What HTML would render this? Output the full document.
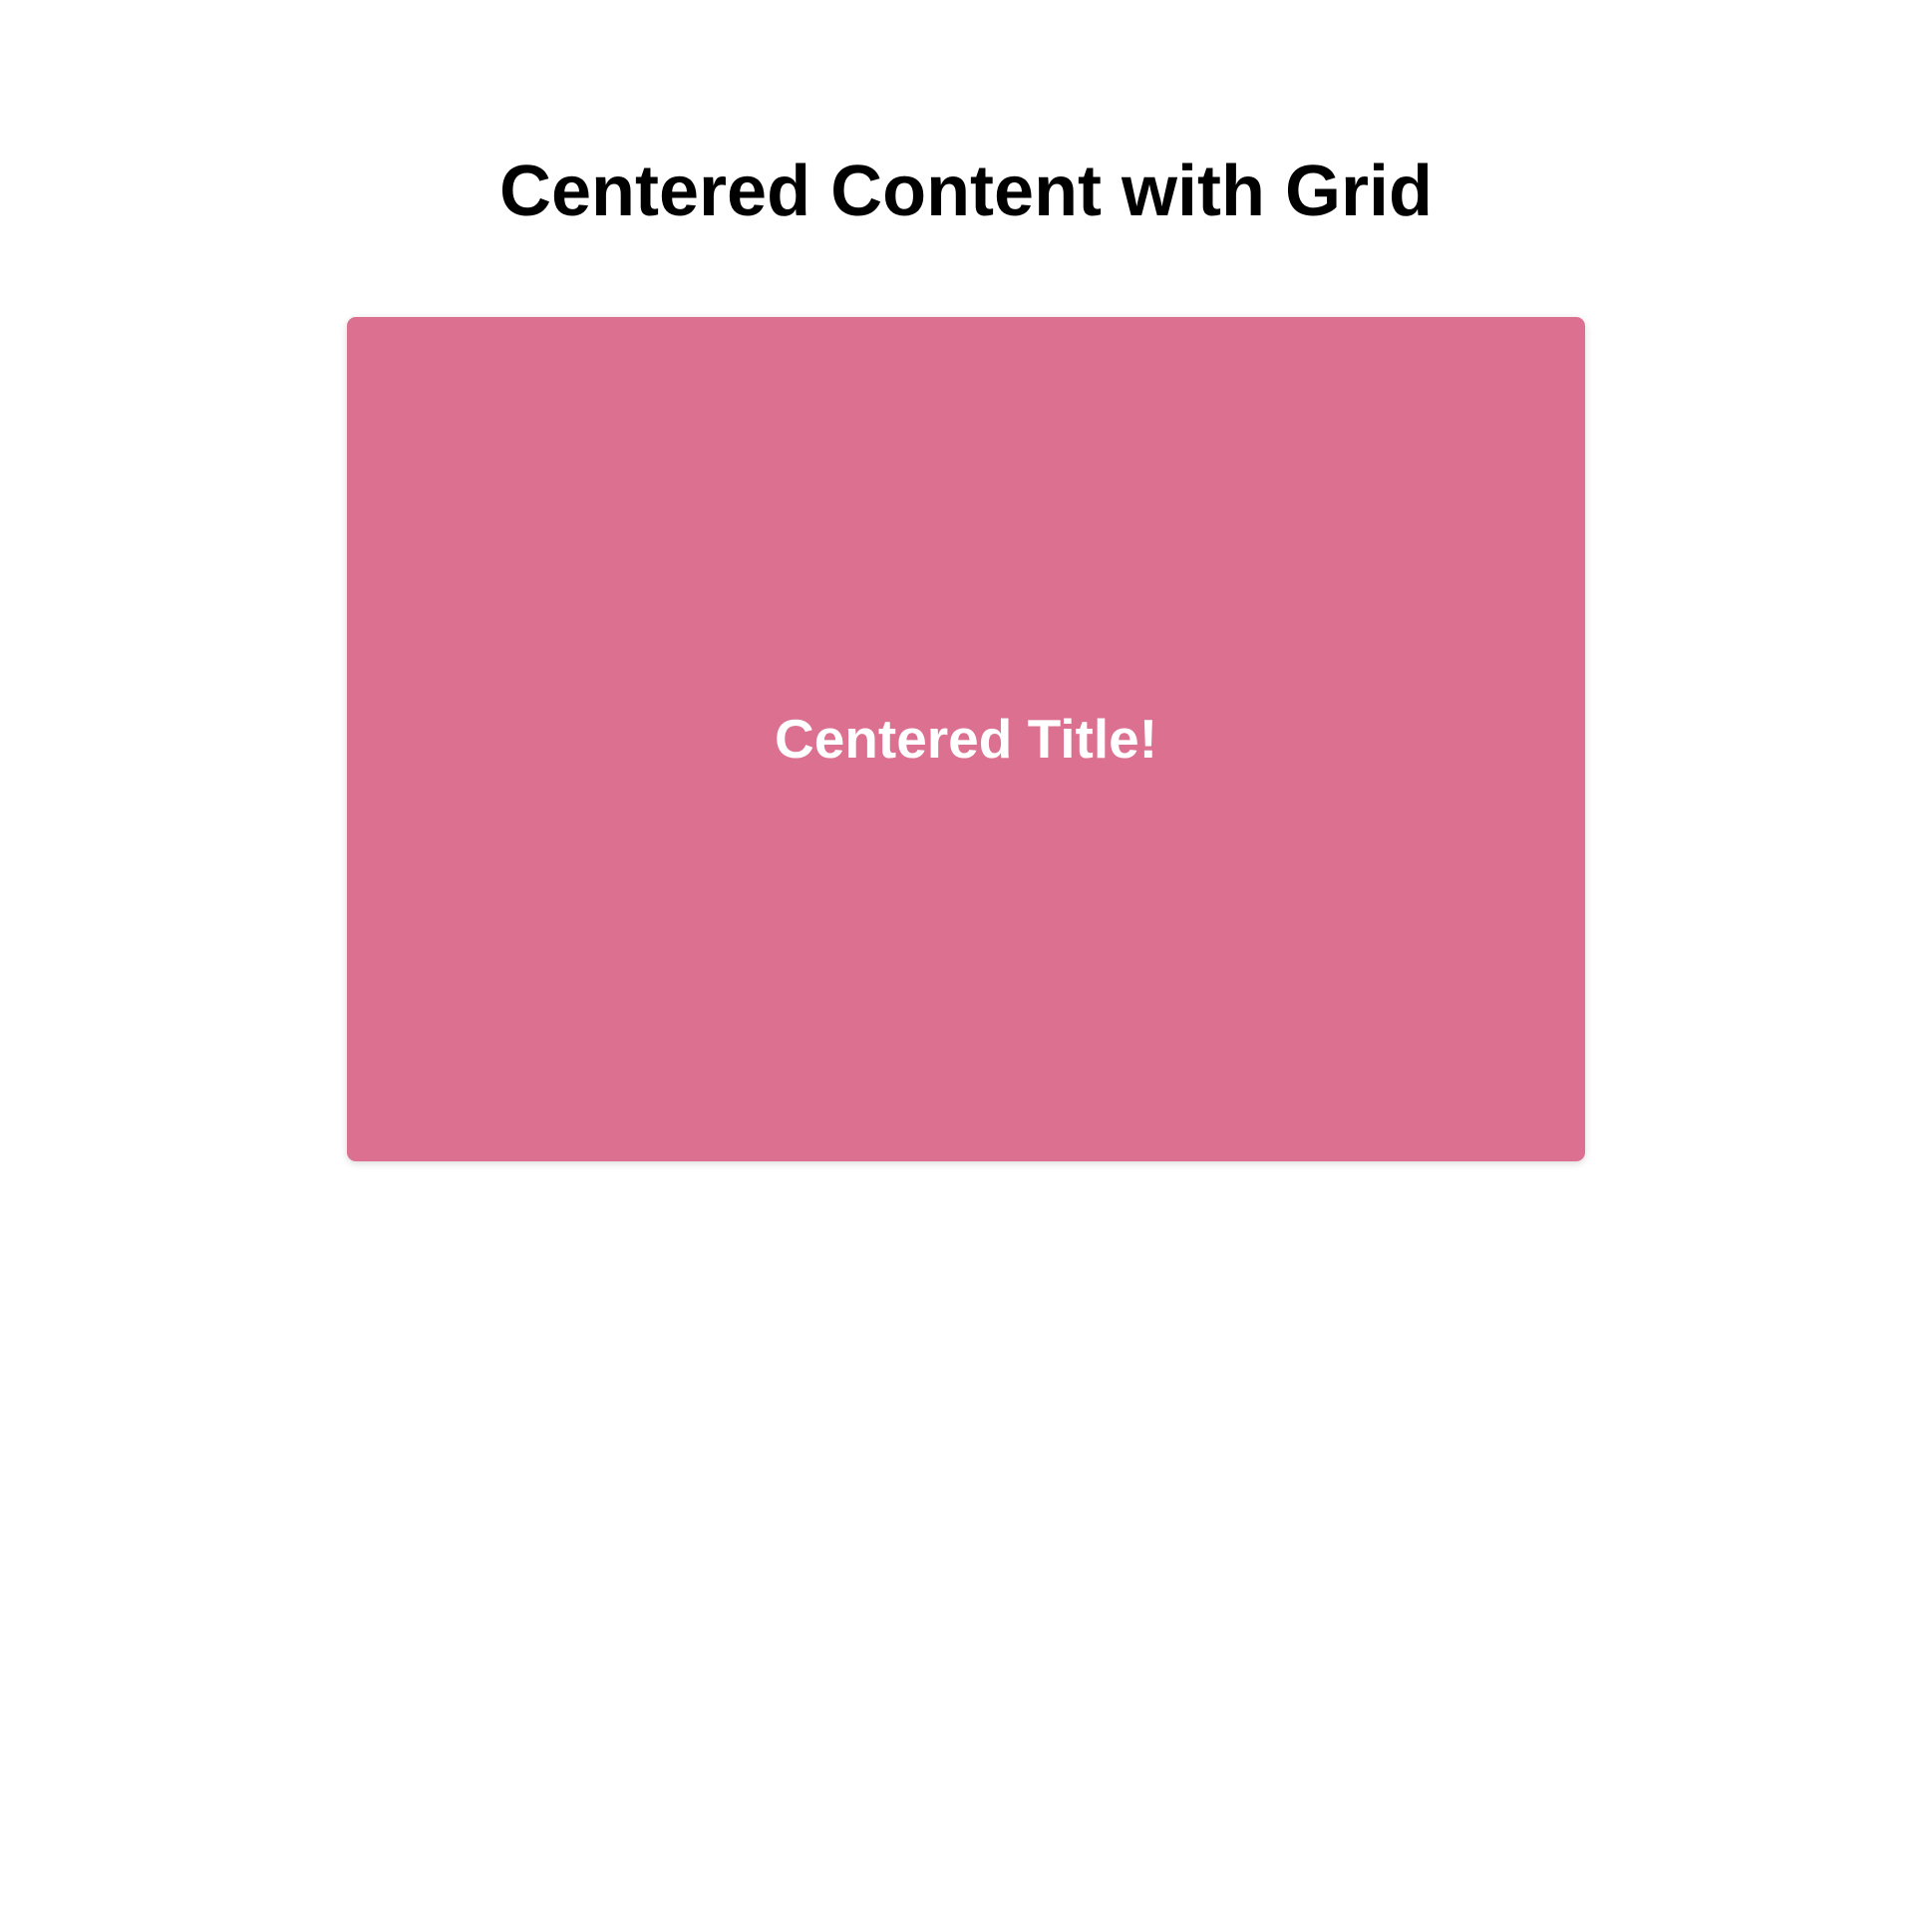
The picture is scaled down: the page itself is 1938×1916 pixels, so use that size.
<!DOCTYPE html>
<html><head><style>
html,body{margin:0;padding:0;background:#fff;width:1938px;height:1916px;overflow:hidden;font-family:"Liberation Sans",sans-serif;}
h1{position:absolute;left:0;width:1938px;top:0;margin:0;text-align:center;font-size:72px;font-weight:bold;line-height:1;padding-top:156px;color:#000;}
.box{position:absolute;left:348px;top:318px;width:1242px;height:847px;background:#dc7090;border-radius:9px;box-shadow:0 2px 8px rgba(0,0,0,0.15);display:flex;align-items:center;justify-content:center;}
.box span{color:#fff;font-weight:bold;font-size:55px;line-height:1;position:relative;top:0px;}
</style></head><body>
<h1>Centered Content with Grid</h1>
<div class="box"><span>Centered Title!</span></div>
</body></html>
